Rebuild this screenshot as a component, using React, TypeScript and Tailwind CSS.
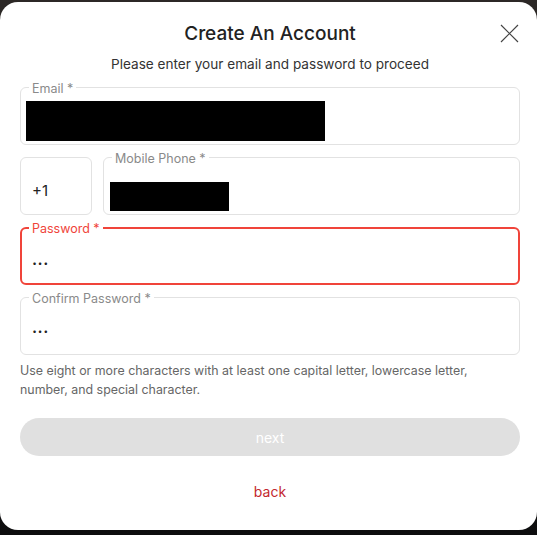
import React from "react";

function Field({
  label,
  error,
  className = "",
  children,
}: {
  label?: string;
  error?: boolean;
  className?: string;
  children?: React.ReactNode;
}) {
  return (
    <div
      className={
        "relative h-[58px] rounded-[6px] " +
        (error ? "border-2 border-[#f0443a]" : "border border-[#e2e2e2]") +
        " " +
        className
      }
    >
      {label && (
        <span
          className={
            "absolute bg-white px-[3px] text-[12.5px] leading-[16px] " +
            (error ? "left-[7px] top-[-8px] text-[#f0443a]" : "left-[8px] top-[-7px] text-[#8a8a8a]")
          }
        >
          {label}
        </span>
      )}
      {children}
    </div>
  );
}

export default function App() {
  return (
    <div
      className="h-[535px] w-full bg-gradient-to-b from-[#2c2826] to-[#0d0d0e] pt-[2px]"
      style={{ fontFamily: "Inter, 'Noto Sans', sans-serif" }}
    >
      <div className="flex h-[528px] flex-col rounded-[18px] bg-white pl-5 pr-[17px]">
        <div className="relative mt-[20px] flex h-[24px] items-center justify-center">
          <h1 className="text-[19px] font-medium leading-[24px] text-[#222]">Create An Account</h1>
          <button className="absolute right-[1px] top-[2px] h-[19px] w-[19px] text-[#444]" aria-label="close">
            <svg viewBox="0 0 19 19" className="h-[19px] w-[19px]" fill="none" stroke="currentColor" strokeWidth="1.2">
              <path d="M1 1L18 18M18 1L1 18" />
            </svg>
          </button>
        </div>
        <p className="mt-[8px] text-center text-[13.6px] leading-[20px] text-[#333]">
          Please enter your email and password to proceed
        </p>
        <div className="mt-[13px] flex flex-col gap-[12px]">
          <Field label="Email *">
            <div className="ml-[5px] mt-[13px] h-[40px] w-[299px] bg-black" />
          </Field>
          <div className="flex gap-[11px]">
            <Field className="flex w-[72px] items-center pl-[11px]">
              <span className="mt-[10px] text-[15px] text-[#222]">+1</span>
            </Field>
            <Field label="Mobile Phone *" className="flex-1">
              <div className="ml-[6px] mt-[24px] h-[29px] w-[119px] bg-black" />
            </Field>
          </div>
          <Field label="Password *" error>
            <div className="pl-[10px] pt-[20px] text-[16px] font-semibold leading-[20px] tracking-[0.5px] text-[#222]">...</div>
          </Field>
          <Field label="Confirm Password *">
            <div className="pl-[11px] pt-[19px] text-[16px] font-semibold leading-[20px] tracking-[0.5px] text-[#222]">...</div>
          </Field>
        </div>
        <p className="mt-[6px] max-w-[460px] text-[12.4px] leading-[19px] text-[#666]">
          Use eight or more characters with at least one capital letter, lowercase letter, number, and special
          character.
        </p>
        <button className="mt-[19px] h-[38px] w-full rounded-full bg-[#e0e0e0] text-[14px] text-white">next</button>
        <button className="mx-auto mt-[26px] text-[14px] leading-[20px] text-[#c3282f]">back</button>
      </div>
    </div>
  );
}
